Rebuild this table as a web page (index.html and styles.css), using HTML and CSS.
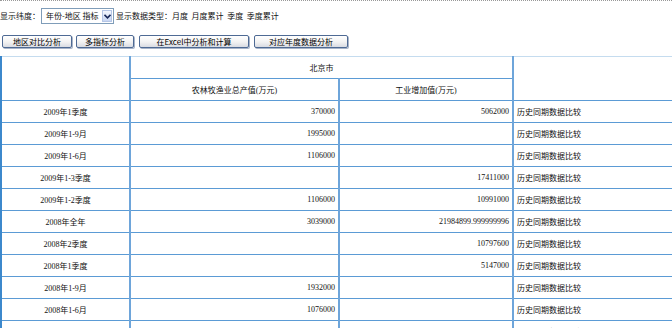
FILE: index.html
```html
<!DOCTYPE html>
<html lang="zh">
<head>
<meta charset="utf-8">
<link rel="stylesheet" href="styles.css">
</head>
<body>
<div class="page">
  <div class="toolbar">
    <span class="label">显示纬度：</span>
    <span class="select">
      <span class="select-value">年份-地区 指标</span>
      <span class="select-arrow"><svg width="7" height="5" viewBox="0 0 7 5"><path d="M0.5 0.8 L3.5 3.8 L6.5 0.8" fill="none" stroke="#1a2a5a" stroke-width="1.6"/></svg></span>
    </span>
    <span class="label">显示数据类型：月度&nbsp; 月度累计&nbsp; 季度&nbsp; 季度累计</span>
  </div>
  <div class="buttons">
    <button class="btn b1">地区对比分析</button>
    <button class="btn b2">多指标分析</button>
    <button class="btn b3">在Excel中分析和计算</button>
    <button class="btn b4">对应年度数据分析</button>
  </div>
  <table class="data">
    <colgroup>
      <col class="c1"><col class="c2"><col class="c3"><col class="c4">
    </colgroup>
    <tr class="h1">
      <td rowspan="2"></td>
      <td colspan="2" class="center">北京市</td>
      <td rowspan="2"></td>
    </tr>
    <tr class="h2">
      <td class="center">农林牧渔业总产值(万元)</td>
      <td class="center">工业增加值(万元)</td>
    </tr>
    <tr><td class="center">2009年1季度</td><td class="num">370000</td><td class="num">5062000</td><td class="link">历史同期数据比较</td></tr>
    <tr><td class="center">2009年1-9月</td><td class="num">1995000</td><td class="num"></td><td class="link">历史同期数据比较</td></tr>
    <tr><td class="center">2009年1-6月</td><td class="num">1106000</td><td class="num"></td><td class="link">历史同期数据比较</td></tr>
    <tr><td class="center">2009年1-3季度</td><td class="num"></td><td class="num">17411000</td><td class="link">历史同期数据比较</td></tr>
    <tr><td class="center">2009年1-2季度</td><td class="num">1106000</td><td class="num">10991000</td><td class="link">历史同期数据比较</td></tr>
    <tr><td class="center">2008年全年</td><td class="num">3039000</td><td class="num">21984899.999999996</td><td class="link">历史同期数据比较</td></tr>
    <tr><td class="center">2008年2季度</td><td class="num"></td><td class="num">10797600</td><td class="link">历史同期数据比较</td></tr>
    <tr><td class="center">2008年1季度</td><td class="num"></td><td class="num">5147000</td><td class="link">历史同期数据比较</td></tr>
    <tr><td class="center">2008年1-9月</td><td class="num">1932000</td><td class="num"></td><td class="link">历史同期数据比较</td></tr>
    <tr><td class="center">2008年1-6月</td><td class="num">1076000</td><td class="num"></td><td class="link">历史同期数据比较</td></tr>
    <tr><td class="center"></td><td class="num"></td><td class="num"></td><td class="link">历史同期数据比较</td></tr>
  </table>
</div>
</body>
</html>
```
FILE: styles.css
```css
html, body {
  margin: 0;
  padding: 0;
  overflow: hidden;
  background: #fff;
}
body {
  font-family: "Liberation Serif", "Noto Sans CJK SC", serif;
  font-size: 8px;
  color: #111;
}
.page {
  width: 760px;
  border-top: 1px dotted #999;
}
.toolbar {
  display: flex;
  align-items: center;
  height: 16px;
  margin-top: 7px;
}
.label {
  font-family: "Noto Sans CJK SC", sans-serif;
  font-size: 8px;
  line-height: 16px;
  color: #111;
}
.select {
  display: flex;
  align-items: center;
  width: 71px;
  height: 14px;
  border: 1px solid #7f9db9;
  margin: 0 2px 0 1px;
  background: #fff;
}
.select-value {
  flex: 1;
  padding-left: 4px;
  font-family: "Noto Sans CJK SC", sans-serif;
  font-size: 8px;
  line-height: 14px;
}
.select-arrow {
  display: flex;
  align-items: center;
  justify-content: center;
  width: 10px;
  height: 12px;
  margin-right: 1px;
  border: 1px solid #b5c6e6;
  box-sizing: border-box;
  background: linear-gradient(#f4f7fe, #c8d6f2);
}
.buttons {
  display: flex;
  margin-top: 11px;
  padding-left: 2px;
  height: 14px;
}
.btn {
  height: 13px;
  margin: 0 4px 0 0;
  padding: 0;
  border: 1px solid #4e6a94;
  border-radius: 2px;
  background: linear-gradient(#ffffff, #f2f2f2 55%, #d8dbe2);
  box-shadow: 1px 1px 0 #a8b4c8;
  font-family: "Noto Sans CJK SC", sans-serif;
  font-size: 8px;
  line-height: 11px;
  color: #000;
  text-align: center;
}
.b1 { width: 70px; }
.b2 { width: 58px; margin-right: 5px; }
.b3 { width: 110px; margin-right: 5px; }
.b4 { width: 94px; }
.data {
  margin-top: 7px;
  border-collapse: collapse;
  table-layout: fixed;
  width: 760px;
}
.c1 { width: 129px; }
.c2 { width: 209px; }
.c3 { width: 174px; }
.c4 { width: 248px; }
.data td {
  height: 21px;
  padding: 0 3px;
  border-top: 1px solid #5b9bd5;
  border-bottom: 1px solid #5b9bd5;
  border-left: 2px solid #6ea5da;
  border-right: 2px solid #6ea5da;
  white-space: nowrap;
  font-size: 8px;
}
.data tr.h1 td {
  border-top: 1px solid #c5dcef;
}
.data td:first-child {
  border-left: 2px solid #3c88cc;
}
.center {
  text-align: center;
  font-family: "Liberation Serif", "Noto Sans CJK SC", serif;
}
.num {
  text-align: right;
  font-family: "Liberation Serif", serif;
}
.link {
  text-align: left;
  font-family: "Noto Sans CJK SC", sans-serif;
}
```
